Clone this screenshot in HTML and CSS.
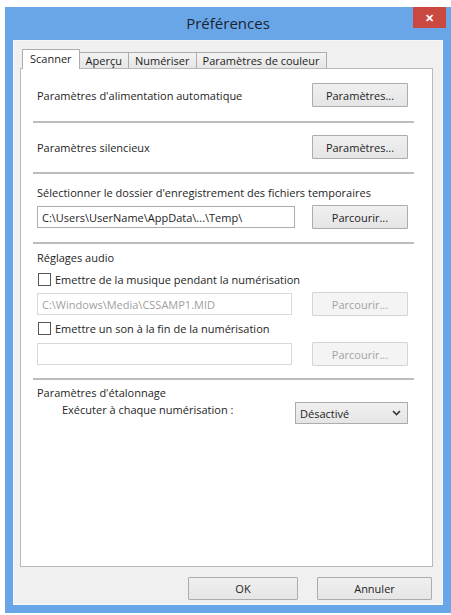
FILE: index.html
```html
<!DOCTYPE html>
<html lang="fr">
<head>
  <meta charset="UTF-8">
  <meta name="viewport" content="width=device-width, initial-scale=1.0">
  <title>Préférences</title>
  <link rel="stylesheet" href="styles.css">
</head>
<body>

  <div class="window">
    <!-- Barre de titre -->
    <div class="titlebar">
      <span></span>
      <span class="title">Préférences</span>
      <span class="close-wrap"><span class="close">&#10005;</span></span>
    </div>

    <div class="client">
      <!-- Onglets -->
      <div class="tabs">
        <div class="tab active">Scanner</div>
        <div class="tab">Aperçu</div>
        <div class="tab">Numériser</div>
        <div class="tab">Paramètres de couleur</div>
      </div>

      <div class="panel">
        <div class="row first">
          <span>Paramètres d'alimentation automatique</span>
          <button class="btn">Paramètres...</button>
        </div>
        <hr class="sep">

        <div class="row row-2">
          <span>Paramètres silencieux</span>
          <button class="btn">Paramètres...</button>
        </div>
        <hr class="sep">

        <div class="label label-3">Sélectionner le dossier d'enregistrement des fichiers temporaires</div>
        <div class="row row-3">
          <input class="field" type="text" value="C:\Users\UserName\AppData\...\Temp\">
          <button class="btn">Parcourir...</button>
        </div>
        <hr class="sep">

        <div class="label label-audio">Réglages audio</div>
        <label class="check check-1"><span class="box"></span>Emettre de la musique pendant la numérisation</label>
        <div class="row row-in">
          <input class="field small" type="text" value="C:\Windows\Media\CSSAMP1.MID" disabled>
          <button class="btn" disabled>Parcourir...</button>
        </div>
        <label class="check check-2"><span class="box"></span>Emettre un son à la fin de la numérisation</label>
        <div class="row row-in2">
          <input class="field small" type="text" value="" disabled>
          <button class="btn" disabled>Parcourir...</button>
        </div>
        <hr class="sep sep-last">

        <div class="label label-cal">Paramètres d'étalonnage</div>
        <div class="row row-cal">
          <span class="indent">Exécuter à chaque numérisation :</span>
          <div class="select">
            <span>Désactivé</span>
            <svg width="9" height="6" viewBox="0 0 9 6"><path d="M1 1 L4.5 4.5 L8 1" fill="none" stroke="#333" stroke-width="1.6"/></svg>
          </div>
        </div>
      </div>

      <div class="footer">
        <button class="btn ok">OK</button>
        <button class="btn cancel">Annuler</button>
      </div>
    </div>
  </div>

</body>
</html>
```

FILE: styles.css
```css
* {
    box-sizing: border-box;
}
body, html {
    margin: 0;
    padding: 0;
    background: #fff;
    font-family: 'Open Sans', 'Liberation Sans', sans-serif;
    font-size: 11px;
    color: #1e1e1e;
}
.window {
    margin: 7px 0 0 5px;
    width: 446px;
    height: 606px;
    background: #69a6e8;
    padding: 0 8px 8px 8px;
}
.titlebar {
    height: 33px;
    display: grid;
    grid-template-columns: 1fr auto 1fr;
    margin: 0 -8px;
}
.title {
    font-size: 15px;
    color: #1a2430;
    line-height: 33px;
}
.close-wrap {
    display: flex;
    justify-content: flex-end;
    align-items: flex-start;
    padding-right: 5px;
}
.close {
    width: 33px;
    height: 21px;
    background: #c9483f;
    color: #fff;
    font-size: 11px;
    font-weight: bold;
    line-height: 21px;
    text-align: center;
}
.client {
    height: 565px;
    background: #f0f0f0;
    border: 1px solid #f8f8f8;
    padding: 8px 9px 0 6px;
}
.tabs {
    display: flex;
    align-items: flex-end;
    height: 20px;
    margin-bottom: -1px;
    padding-left: 2px;
}
.tab {
    height: 16px;
    margin-bottom: 1px;
    padding: 0 6px;
    line-height: 15px;
    border: 1px solid #acacac;
    border-bottom: none;
    border-left: none;
    background: linear-gradient(#f3f3f3, #e6e6e6);
    white-space: nowrap;
}
.tab.active {
    height: 20px;
    margin-bottom: 0;
    padding: 0 7px;
    line-height: 18px;
    border-left: 1px solid #acacac;
    background: #fff;
    position: relative;
    z-index: 1;
}
.panel {
    height: 499px;
    background: #fff;
    border: 1px solid #b9b9b9;
    padding: 14px 18px 0 12px;
}
.sep {
    margin: 14px 0 0;
    border: 0;
    height: 2px;
    background: #bdbdbd;
}
.row {
    display: flex;
    justify-content: space-between;
    align-items: center;
    height: 24px;
    padding: 0 6px 0 4px;
}
.row-2 { margin-top: 12px; }
.row-2 + .sep { margin-top: 13px; }
.label {
    line-height: 14px;
    padding-left: 4px;
    white-space: nowrap;
}
.label-3 { margin-top: 12px; }
.row-3 { margin-top: 5px; }
.row-3 + .sep { margin-top: 13px; }
.label-audio { margin-top: 7px; }
.check {
    display: flex;
    align-items: center;
    height: 14px;
    padding-left: 5px;
}
.check-1 { margin-top: 7px; }
.check-2 { margin-top: 5px; }
.box {
    width: 13px;
    height: 13px;
    border: 1px solid #555;
    background: #fff;
    margin-right: 4px;
}
.row-in { margin-top: 6px; }
.row-in2 { margin-top: 7px; }
.sep-last { margin-top: 12px; }
.label-cal { margin-top: 6px; }
.row-cal {
    margin-top: 2px;
    align-items: flex-start;
    height: 22px;
}
.indent {
    padding-left: 25px;
    margin-top: 1px;
    line-height: 14px;
}
.field {
    width: 258px;
    height: 22px;
    border: 1px solid #abadb3;
    padding: 0 4px;
    font-family: inherit;
    font-size: 11px;
    color: #1e1e1e;
    background: #fff;
}
.field.small {
    width: 255px;
}
.field:disabled {
    border-color: #d9d9d9;
    color: #a0a0a0;
    background: #fff;
}
.btn {
    width: 96px;
    height: 24px;
    padding: 0;
    border: 1px solid #acacac;
    border-radius: 1px;
    background: linear-gradient(#f0f0f0, #e5e5e5);
    font-family: inherit;
    font-size: 11px;
    color: #1e1e1e;
}
.btn:disabled {
    border-color: #d5d5d5;
    background: #f4f4f4;
    color: #a3a3a3;
}
.select {
    width: 113px;
    height: 22px;
    border: 1px solid #acacac;
    background: linear-gradient(#f0f0f0, #e5e5e5);
    display: flex;
    justify-content: space-between;
    align-items: center;
    padding: 0 6px 0 4px;
}
.footer {
    display: flex;
    justify-content: flex-end;
    gap: 19px;
    margin-top: 10px;
    padding-right: 1px;
}
.footer .btn {
    height: 23px;
}
.ok { width: 110px; }
.cancel { width: 115px; }
```
